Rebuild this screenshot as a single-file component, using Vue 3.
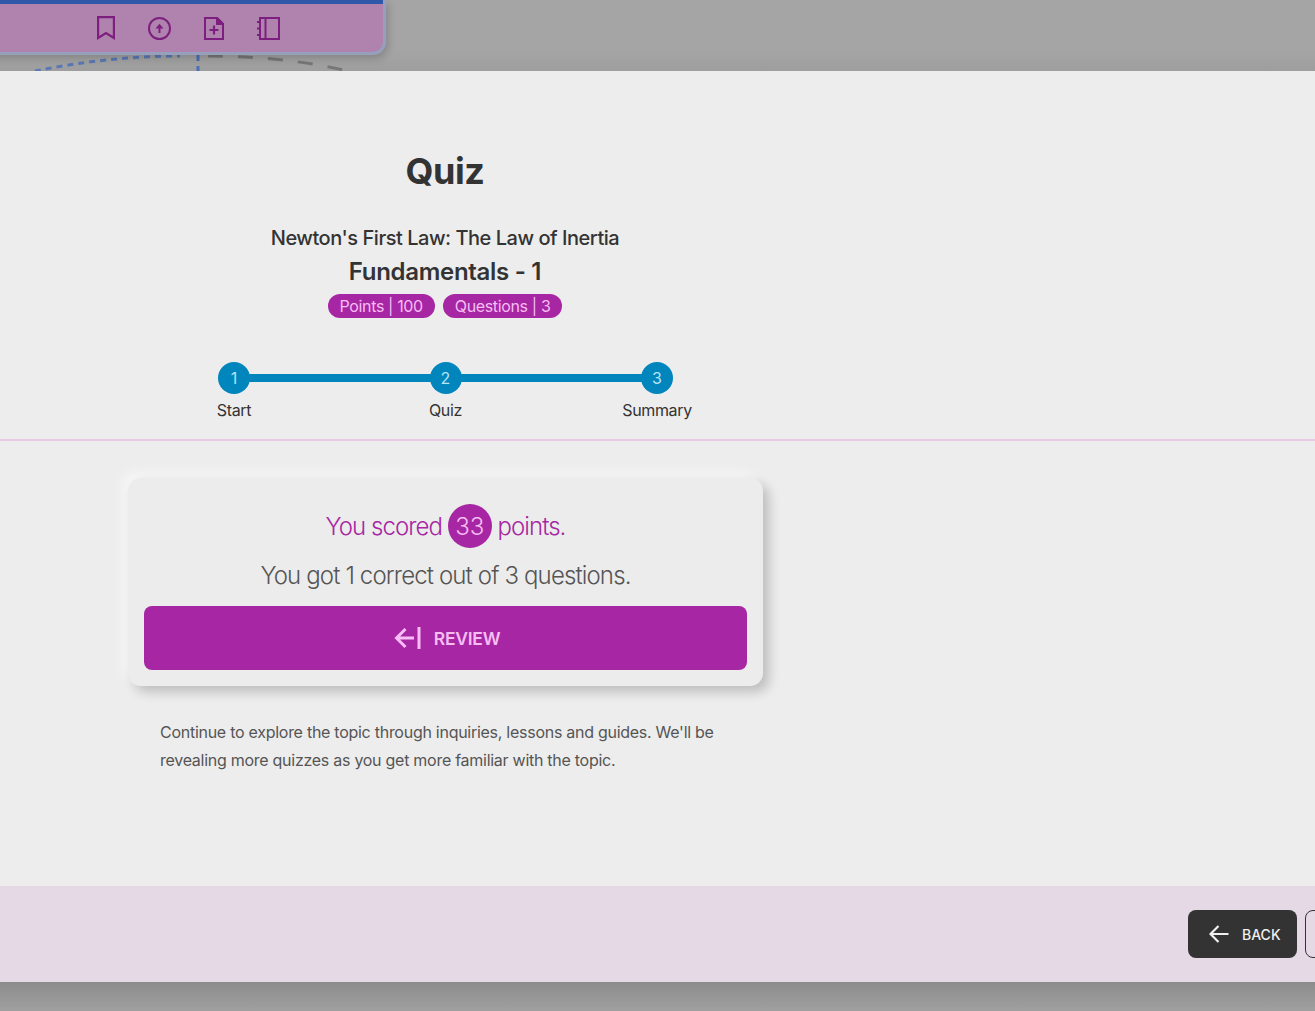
<script setup>
const steps = [
  { n: 1, label: 'Start' },
  { n: 2, label: 'Quiz' },
  { n: 3, label: 'Summary' },
]
</script>

<template>
  <div class="page">
    <div class="top">
      <svg class="lines" width="420" height="71" viewBox="0 0 420 71">
        <path d="M35 71 C 80 62 130 56 180 56" fill="none" stroke="#5a78b5" stroke-width="3" stroke-dasharray="6 5" />
        <path d="M198 55 V71" fill="none" stroke="#4a6fb8" stroke-width="3" stroke-dasharray="6 5" />
        <path d="M208 56 C 250 56 300 60 343 70" fill="none" stroke="#777" stroke-width="3" stroke-dasharray="15 15" />
      </svg>
      <div class="toolbar">
        <svg width="18" height="24" viewBox="0 0 18 24" fill="none" stroke="#7d1f7f" stroke-width="2.2">
          <path d="M1.1 1.1 H16.9 V22 L9 17 L1.1 22 Z" />
        </svg>
        <svg width="23" height="23" viewBox="0 0 23 23" fill="none" stroke="#7d1f7f" stroke-width="2">
          <circle cx="11.5" cy="11.5" r="10.5" />
          <path d="M11.5 16 V10" stroke-width="2" />
          <path d="M7.5 11.5 L11.5 6.8 L15.5 11.5 Z" fill="#7d1f7f" stroke="none" />
        </svg>
        <svg width="20" height="23" viewBox="0 0 20 23" fill="none" stroke="#7d1f7f" stroke-width="2">
          <path d="M1 1 H13 L19 7 V22 H1 Z" />
          <path d="M13 1 V7 H19 Z" fill="#7d1f7f" />
          <path d="M10 8.5 V17.5 M5.5 13 H14.5" stroke-width="2.2" />
        </svg>
        <svg width="23" height="23" viewBox="0 0 23 23" fill="none" stroke="#7d1f7f" stroke-width="2">
          <path d="M3 1 H22 V22 H3 Z" />
          <path d="M8.5 1 V22" />
          <path d="M0 5 H3 M0 11.5 H3 M0 18 H3" />
        </svg>
      </div>
    </div>

    <main class="modal">
      <section class="head">
        <div class="head-inner">
          <h1 class="title">Quiz</h1>
          <p class="lesson">Newton's First Law: The Law of Inertia</p>
          <h2 class="sub">Fundamentals - 1</h2>
          <div class="chips">
            <span class="chip">Points | 100</span>
            <span class="chip">Questions | 3</span>
          </div>
          <div class="stepper">
            <div class="track"></div>
            <div v-for="s in steps" :key="s.n" class="step">
              <span class="dot">{{ s.n }}</span>
              <span class="label">{{ s.label }}</span>
            </div>
          </div>
        </div>
      </section>

      <section class="body">
        <div class="card">
          <p class="score">You scored <span class="badge">33</span> points.</p>
          <p class="got">You got 1 correct out of 3 questions.</p>
          <button class="review" type="button">
            <svg width="27" height="22" viewBox="0 0 27 22" fill="none" stroke="#f8bdf6" stroke-width="3">
              <path d="M20 11 H3 M11.5 2 L2.5 11 L11.5 20" />
              <path d="M25 0 V22" />
            </svg>
            <span>REVIEW</span>
          </button>
        </div>
        <p class="note">Continue to explore the topic through inquiries, lessons and guides. We'll be revealing more quizzes as you get more familiar with the topic.</p>
      </section>
    </main>

    <footer class="foot">
      <button class="back" type="button">
        <svg width="20" height="18" viewBox="0 0 20 18" fill="none" stroke="#f0f0f0" stroke-width="2.2">
          <path d="M19.5 9 H1.5 M9.5 1 L1.5 9 L9.5 17" />
        </svg>
        <span>BACK</span>
      </button>
      <span class="next"></span>
    </footer>

    <div class="bottom"></div>
  </div>
</template>

<style>
html, body { margin: 0; background: #a0a0a0; }
</style>

<style scoped>
.page {
  width: 1315px;
  height: 1011px;
  display: flex;
  flex-direction: column;
  overflow: hidden;
  font-family: Inter, "Liberation Sans", sans-serif;
  color: #333;
}
.top {
  position: relative;
  height: 71px;
  flex: none;
  background: linear-gradient(#a5a5a5 0, #a5a5a5 50px, #9e9e9e 71px);
}
.lines { position: absolute; left: 0; top: 0; }
.toolbar {
  position: absolute;
  left: -20px;
  top: 0;
  width: 406px;
  height: 55px;
  box-sizing: border-box;
  padding: 4px 0 0 117px;
  display: flex;
  align-items: center;
  gap: 33px;
  background: #b083af;
  border: solid #96a0bc;
  border-width: 0 3px 3px 0;
  border-radius: 0 0 13px 0;
  box-shadow: 2px 3px 8px rgba(0, 0, 0, 0.2);
}
.toolbar::before {
  content: "";
  position: absolute;
  left: 0;
  right: 0;
  top: 0;
  height: 4px;
  background: #2f58a8;
}
.modal {
  flex: none;
  height: 815px;
  background: #ededed;
}
.head {
  height: 370px;
  box-sizing: border-box;
  border-bottom: 2px solid #e6cbe7;
  padding-top: 79px;
}
.head-inner {
  width: 890px;
  text-align: center;
}
.title {
  margin: 0;
  font-size: 36px;
  line-height: 42px;
  font-weight: 700;
  letter-spacing: -0.5px;
  color: #333;
}
.lesson {
  margin: 32px 0 0;
  font-size: 20px;
  line-height: 28px;
  font-weight: 500;
  letter-spacing: -0.47px;
}
.sub {
  margin: 4px 0 0;
  font-size: 24px;
  line-height: 32px;
  font-weight: 600;
  letter-spacing: -0.3px;
}
.chips {
  margin-top: 6px;
  display: flex;
  justify-content: center;
  gap: 8px;
}
.chip {
  height: 24px;
  padding: 0 12px;
  border-radius: 12px;
  background: #a726a3;
  color: #f6bdf4;
  font-size: 16px;
  line-height: 24px;
  letter-spacing: -0.36px;
}
.stepper {
  position: relative;
  margin: 44px 0 0 145px;
  width: 601px;
  display: flex;
  justify-content: space-between;
}
.track {
  position: absolute;
  left: 89px;
  right: 89px;
  top: 12px;
  height: 8px;
  background: #0085bd;
}
.step {
  position: relative;
  width: 178px;
  display: flex;
  flex-direction: column;
  align-items: center;
}
.dot {
  width: 32px;
  height: 32px;
  border-radius: 50%;
  background: #0085bd;
  color: #b7e3f7;
  font-size: 16px;
  line-height: 32px;
  text-align: center;
}
.label {
  margin-top: 4px;
  font-size: 16px;
  line-height: 24px;
  letter-spacing: -0.35px;
  color: #333;
}
.body {
  width: 890px;
  box-sizing: border-box;
  padding: 37px 128px 0;
}
.card {
  width: 635px;
  height: 208px;
  box-sizing: border-box;
  padding: 26px 16px 16px;
  border-radius: 13px;
  background: #ececec;
  box-shadow: 6px 6px 12px rgba(0, 0, 0, 0.2), -6px -6px 12px rgba(255, 255, 255, 0.5);
  text-align: center;
}
.score {
  margin: 0;
  height: 44px;
  font-size: 24px;
  line-height: 46px;
  font-weight: 300;
  letter-spacing: -0.95px;
  color: #a726a3;
}
.badge {
  display: inline-block;
  width: 44px;
  height: 44px;
  margin: 0;
  border-radius: 50%;
  background: #a726a3;
  color: #f6bdf4;
  letter-spacing: 0;
  line-height: 46px;
  vertical-align: top;
}
.got {
  margin: 10px 0 0;
  font-size: 24px;
  line-height: 36px;
  font-weight: 300;
  letter-spacing: -0.86px;
  color: #555;
}
.review {
  margin-top: 12px;
  width: 603px;
  height: 64px;
  border: 0;
  border-radius: 8px;
  background: #a726a3;
  color: #f6bdf4;
  font-family: inherit;
  font-size: 17.5px;
  font-weight: 600;
  letter-spacing: -0.25px;
  display: flex;
  align-items: center;
  justify-content: center;
  gap: 13px;
  padding: 0 0 0 3px;
}
.note {
  margin: 32px 32px 0;
  font-size: 16px;
  line-height: 28px;
  letter-spacing: -0.27px;
  color: #555;
  width: 571px;
}
.foot {
  flex: none;
  height: 96px;
  box-sizing: border-box;
  background: #e6d9e6;
  padding: 24px 0 0 1188px;
  display: flex;
  gap: 8px;
}
.back {
  flex: none;
  width: 109px;
  height: 48px;
  border: 0;
  border-radius: 8px;
  background: #333;
  color: #f0f0f0;
  font-family: inherit;
  font-size: 14px;
  font-weight: 500;
  display: flex;
  align-items: center;
  gap: 13px;
  padding: 0 0 0 21px;
}
.next {
  flex: none;
  width: 60px;
  height: 46px;
  border: 1px solid #333;
  border-radius: 8px;
}
.bottom {
  flex: 1;
  background: linear-gradient(#8c8c8c, #a0a0a0);
}
</style>
